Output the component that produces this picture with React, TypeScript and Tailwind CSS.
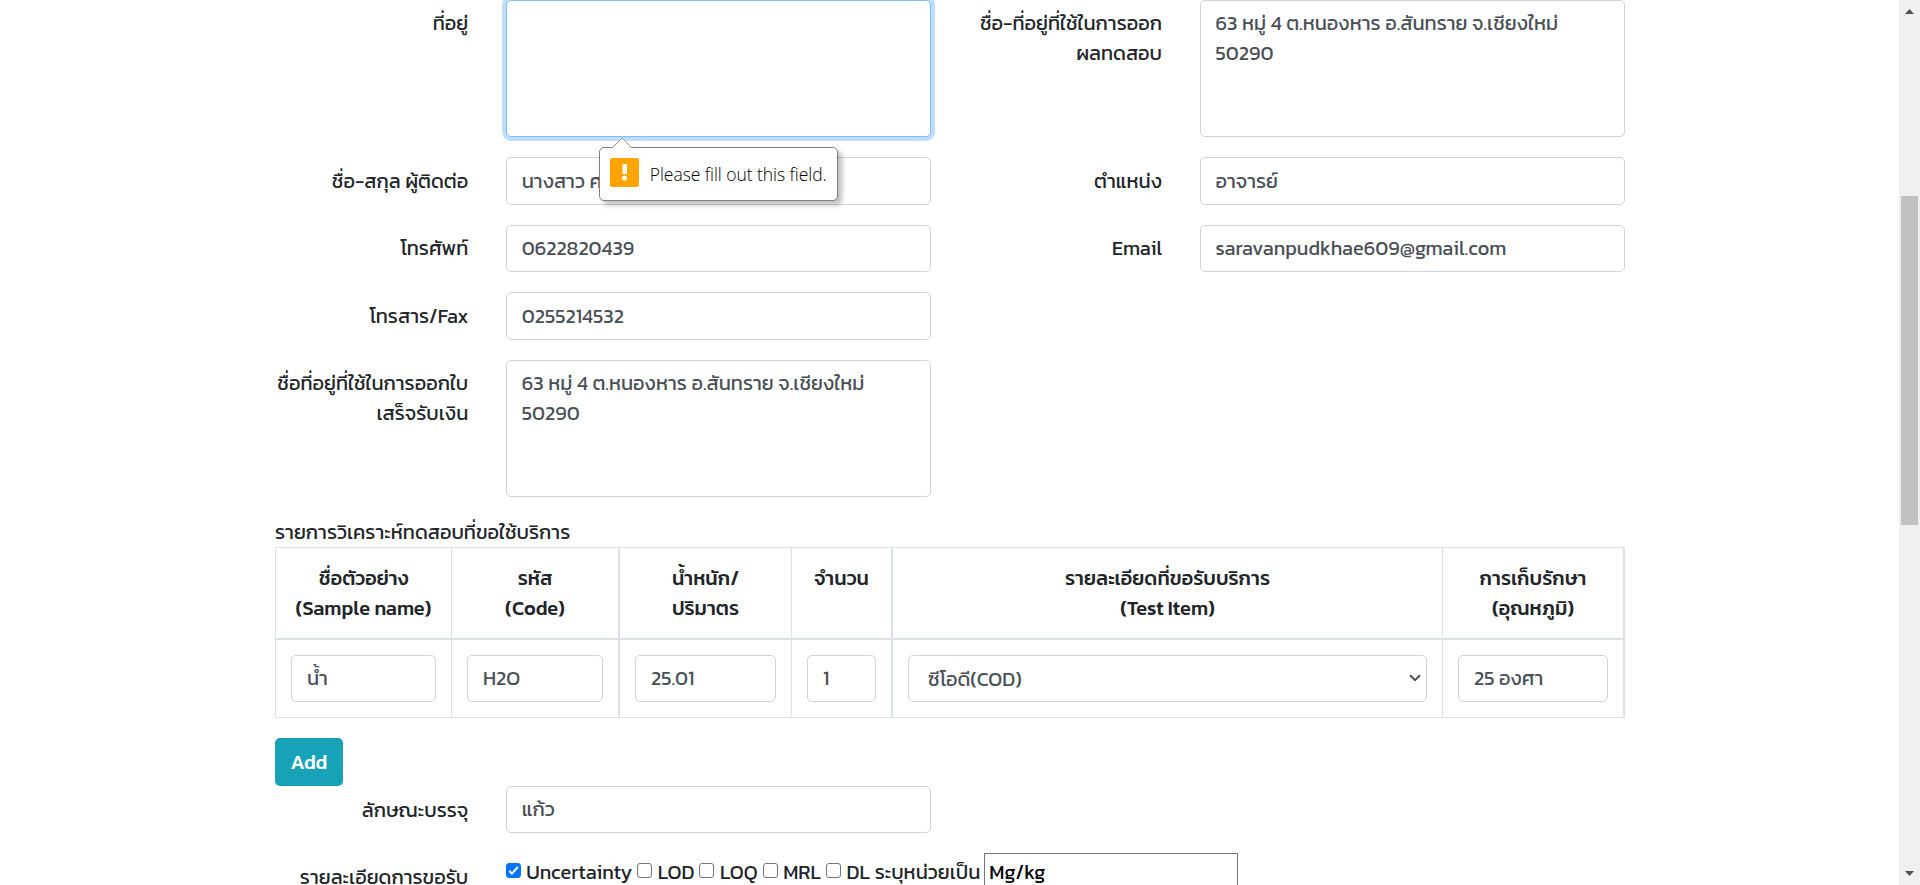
import type { ReactNode } from "react";

const label = "w-[231.25px] shrink-0 px-[18.75px] pt-[8.5px] text-right leading-[30px]";
const control =
  "block w-full rounded-[5px] border bg-white px-[15px] text-[20px] leading-[30px] text-[#495057]";

function Field({ title, children }: { title: ReactNode; children: ReactNode }) {
  return (
    <>
      <div className={label}>{title}</div>
      <div className="w-[462.5px] shrink-0 px-[18.75px]">{children}</div>
    </>
  );
}

function Input({ value }: { value: string }) {
  return <input readOnly value={value} className={control + " h-[47.5px] border-[#ced4da]"} />;
}

function Area({ value, focused }: { value: string; focused?: boolean }) {
  return (
    <textarea
      readOnly
      value={value}
      className={
        control +
        " h-[137px] resize-none py-[7.5px] outline-none" +
        (focused ? " border-[#80bdff] shadow-[0_0_0_4px_#bfdeff]" : " border-[#ced4da]")
      }
    />
  );
}

function Check({ name, checked }: { name: string; checked?: boolean }) {
  return (
    <label className="flex items-center">
      <span
        className={
          "mt-[-2px] mr-[5.5px] flex h-[15px] w-[15px] items-center justify-center rounded-[3px] border " +
          (checked ? "border-[#0075ff] bg-[#0075ff]" : "border-[#767676] bg-white")
        }
      >
        {checked && (
          <svg viewBox="0 0 13 13" className="h-[13px] w-[13px]">
            <path d="M2.2 6.8 5 9.6 10.8 3" fill="none" stroke="#fff" strokeWidth="2" />
          </svg>
        )}
      </span>
      {name}
    </label>
  );
}

const th = "border-[#dee2e6] pt-[15px] text-center align-top font-medium leading-[30px]";

export default function App() {
  return (
    <div className="flex h-[885px] w-full overflow-hidden bg-white font-['Kanit','Noto_Sans_Thai',sans-serif] text-[20px] leading-[30px] font-normal text-[#212529]">
      <main className="w-[1899px] shrink-0 pl-[255.75px]">
        <div className="flex w-[1387.5px] flex-col gap-[20px]">
          <div className="mt-[-0.25px] mb-[0.25px] flex">
            <Field title="ที่อยู่">
              <Area value="" focused />
            </Field>
            <Field title={<>ชื่อ-ที่อยู่ที่ใช้ในการออก<br />ผลทดสอบ</>}>
              <Area value={"63 หมู่ 4 ต.หนองหาร อ.สันทราย จ.เชียงใหม่\n50290"} />
            </Field>
          </div>
          <div className="relative flex">
            <Field title="ชื่อ-สกุล ผู้ติดต่อ">
              <Input value="นางสาว ศ" />
            </Field>
            <Field title="ตำแหน่ง">
              <Input value="อาจารย์" />
            </Field>
            <div className="absolute top-[-10px] left-[343px] flex h-[54px] w-[239px] items-center rounded-[5px] border border-[#808080] bg-white pl-[10px] shadow-[4px_4px_5px_rgba(0,0,0,0.25)]">
              <svg viewBox="0 0 22 12" className="absolute top-[-11px] left-[11px] h-[12px] w-[22px]">
                <path d="M1 12 11 1 21 12Z" fill="#fff" />
                <path d="M1 11 11 1 21 11" fill="none" stroke="#999" />
              </svg>
              <svg viewBox="0 0 29 29" className="mt-[-3px] h-[29px] w-[29px]">
                <rect width="29" height="29" rx="2" fill="#ffa400" />
                <rect x="12.5" y="6" width="4.5" height="10" fill="#fff" />
                <circle cx="14.5" cy="20" r="2.5" fill="#fff" />
              </svg>
              <span className="ml-[11px] font-['Open_Sans',sans-serif] text-[17.5px] font-light tracking-[-0.05px] whitespace-nowrap text-black">
                Please fill out this field.
              </span>
            </div>
          </div>
          <div className="flex">
            <Field title="โทรศัพท์">
              <Input value="0622820439" />
            </Field>
            <Field title="Email">
              <Input value="saravanpudkhae609@gmail.com" />
            </Field>
          </div>
          <div className="flex">
            <Field title="โทรสาร/Fax">
              <Input value="0255214532" />
            </Field>
          </div>
          <div className="flex">
            <Field title={<>ชื่อที่อยู่ที่ใช้ในการออกใบ<br />เสร็จรับเงิน</>}>
              <Area value={"63 หมู่ 4 ต.หนองหาร อ.สันทราย จ.เชียงใหม่\n50290"} />
            </Field>
          </div>
        </div>

        <div className="mt-[20px] ml-[19.25px] w-[1350px]">
          <div>รายการวิเคราะห์ทดสอบที่ขอใช้บริการ</div>
          <div className="grid w-[1350px] grid-cols-[176px_168px_172px_101px_550px_182px] border-t border-b border-l border-[#dee2e6]">
            <div className={th + " h-[92px] border-r border-b-2"}>ชื่อตัวอย่าง<br />(Sample name)</div>
            <div className={th + " border-r-2 border-b-2"}>รหัส<br />(Code)</div>
            <div className={th + " border-r border-b-2"}>น้ำหนัก/<br />ปริมาตร</div>
            <div className={th + " border-r-2 border-b-2"}>จำนวน</div>
            <div className={th + " border-r border-b-2"}>รายละเอียดที่ขอรับบริการ<br />(Test Item)</div>
            <div className={th + " border-r-2 border-b-2"}>การเก็บรักษา<br />(อุณหภูมิ)</div>
            <div className="h-[77px] border-r border-[#dee2e6] px-[15px] pt-[15px]"><Input value="น้ำ" /></div>
            <div className="border-r-2 border-[#dee2e6] px-[15px] pt-[15px]"><Input value="H2O" /></div>
            <div className="border-r border-[#dee2e6] px-[15px] pt-[15px]"><Input value="25.01" /></div>
            <div className="border-r-2 border-[#dee2e6] px-[15px] pt-[15px]"><Input value="1" /></div>
            <div className="border-r border-[#dee2e6] px-[15px] pt-[15px]">
              <div className={control + " flex h-[47.5px] items-center border-[#ced4da]"}>
                <span className="mt-px ml-[4px] flex-1">ซีโอดี(COD)</span>
                <svg viewBox="0 0 12 8" className="mr-[-10px] h-[8px] w-[12px]">
                  <path d="M1 1.2 6 6.2 11 1.2" fill="none" stroke="#495057" strokeWidth="2" />
                </svg>
              </div>
            </div>
            <div className="border-r-2 border-[#dee2e6] px-[15px] pt-[15px]"><Input value="25 องศา" /></div>
          </div>
          <button className="mt-[20px] block h-[48px] w-[68px] rounded-[5px] bg-[#17a2b8] text-center font-medium text-white">Add</button>
        </div>

        <div className="flex">
          <Field title={<div className="pt-[0.75px]">ลักษณะบรรจุ</div>}>
            <Input value="แก้ว" />
          </Field>
        </div>
        <div className="mt-[19.5px] flex">
          <div className={label}>
            <div className="pt-[0.75px]">รายละเอียดการขอรับ</div>
          </div>
          <div className="flex h-[38px] items-center gap-[5px] pl-[18.75px] whitespace-nowrap">
            <Check name="Uncertainty" checked />
            <Check name="LOD" />
            <Check name="LOQ" />
            <Check name="MRL" />
            <Check name="DL ระบุหน่วยเป็น" />
            <input readOnly value="Mg/kg" className="ml-[-1px] h-[38px] w-[254px] border border-[#767676] bg-white px-[4px] text-[20px] text-black" />
          </div>
        </div>
      </main>
      <aside className="flex h-[885px] w-[21px] shrink-0 flex-col items-center bg-[#f0f0f0]">
        <svg viewBox="0 0 9 5" className="mt-[9px] h-[5px] w-[9px]"><path d="M0 5 4.5 0 9 5Z" fill="#505050" /></svg>
        <div className="mt-[182px] h-[329px] w-[17px] bg-[#c1c1c1]" />
        <svg viewBox="0 0 9 5" className="mt-[346px] h-[5px] w-[9px]"><path d="M0 0 4.5 5 9 0Z" fill="#505050" /></svg>
      </aside>
    </div>
  );
}
